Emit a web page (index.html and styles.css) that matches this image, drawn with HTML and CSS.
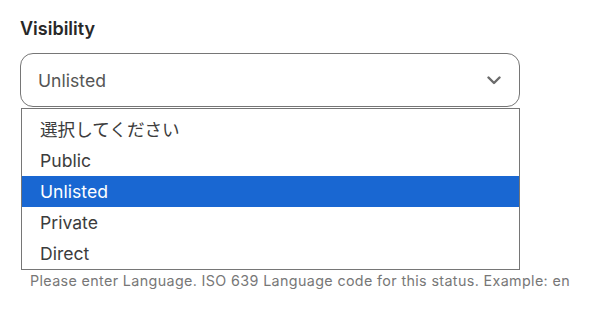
FILE: index.html
```html
<!DOCTYPE html>
<html>
<head>
<meta charset="utf-8">
<link rel="stylesheet" href="styles.css">
</head>
<body>
<div class="field">
  <div class="label">Visibility</div>
  <div class="select-wrap">
    <div class="select">
      <span class="value">Unlisted</span>
      <svg class="chev" width="14" height="9" viewBox="0 0 14 9"><path d="M1.5 1.5 L7 7 L12.5 1.5" fill="none" stroke="#6b6b6b" stroke-width="2.4" stroke-linecap="round" stroke-linejoin="round"/></svg>
    </div>
    <ul class="menu">
      <li class="opt first">選択してください</li>
      <li class="opt">Public</li>
      <li class="opt sel">Unlisted</li>
      <li class="opt">Private</li>
      <li class="opt">Direct</li>
    </ul>
  </div>
  <div class="spacer"></div>
  <p class="hint">Please enter Language. ISO 639 Language code for this status. Example: en</p>
</div>
</body>
</html>
```
FILE: styles.css
```css
html, body {
  margin: 0;
  padding: 0;
  background: #ffffff;
}
body {
  font-family: "Inter", "Noto Sans CJK JP", sans-serif;
  color: #333;
}
.field {
  padding: 18px 0 0 20px;
  width: 500px;
}
.label {
  font-size: 18px;
  font-weight: 600;
  color: #282828;
  line-height: 22px;
  height: 22px;
}
.select-wrap {
  position: relative;
  margin-top: 13px;
}
.select {
  box-sizing: border-box;
  height: 54px;
  border: 1px solid #767676;
  border-radius: 13px;
  display: flex;
  align-items: center;
  justify-content: space-between;
  padding: 0 18px 0 17px;
}
.value {
  font-size: 17.6px;
  color: #555;
}
.chev {
  display: block;
}
.menu {
  position: absolute;
  left: 1px;
  top: 55px;
  box-sizing: border-box;
  width: 499px;
  margin: 0;
  padding: 5px 0 0 0;
  list-style: none;
  border: 1px solid #767676;
  background: #fff;
}
.opt {
  height: 31px;
  line-height: 31px;
  padding-left: 18px;
  font-size: 17.6px;
  color: #3c3c3c;
}
.opt.sel {
  background: #1967d2;
  color: #ffffff;
}
.spacer {
  height: 165px;
}
.hint {
  margin: 0 0 0 10px;
  font-size: 14.3px;
  color: #777;
  letter-spacing: 0.37px;
  line-height: 18px;
  white-space: nowrap;
}
```
